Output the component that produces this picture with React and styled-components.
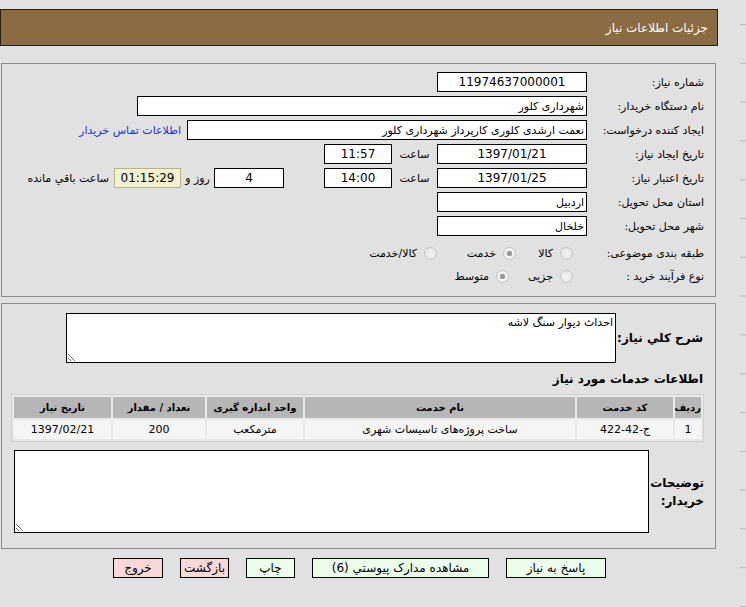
import React from 'react'
import styled, { createGlobalStyle } from 'styled-components'

const GlobalStyle = createGlobalStyle`
  body {
    margin: 0;
    background: #e1e1e1;
    font-family: "DejaVu Sans", Tahoma, sans-serif;
    font-size: 11px;
    color: #000;
  }
`;

const Page = styled.div`
  display: flex;
  width: 746px;
  height: 607px;
  overflow: hidden;
`;

const Main = styled.div`
  width: 718px;
  direction: rtl;
  padding-top: 9px;
  display: flex;
  flex-direction: column;
`;

const Strip = styled.div`
  flex: 1;
  background-image: linear-gradient(to bottom, #b9b9b9 0 1px, transparent 1px);
  background-size: 6px 38.8px;
  background-repeat: repeat-y;
  background-position: right 24px;
`;

const Header = styled.div`
  height: 35px;
  background: #8b6c42;
  border: 1px solid #2a2010;
  color: #fff;
  display: flex;
  align-items: center;
  padding-right: 9px;
  font-size: 12px;
`;

const Panel = styled.div`
  margin: ${p => p.$top}px 2px 0 1px;
  height: ${p => p.$height}px;
  border: 1px solid #8c8c8c;
  box-sizing: border-box;
  padding: ${p => p.$pad};
  display: flex;
  flex-direction: column;
`;

const Row = styled.div`
  display: flex;
  align-items: center;
  height: ${p => p.$h || 24}px;
  margin-top: ${p => p.$mt || 0}px;
`;

const Label = styled.div`
  width: 117px;
  flex-shrink: 0;
  white-space: nowrap;
`;

const Field = styled.div`
  width: ${p => p.$w}px;
  height: 20px;
  box-sizing: border-box;
  border: 1px solid #000;
  background: ${p => (p.$yellow ? '#f5f1cf' : '#fff')};
  border-color: ${p => (p.$yellow ? '#b9b48a' : '#000')};
  display: flex;
  align-items: center;
  justify-content: ${p => (p.$right ? 'flex-start' : 'center')};
  padding: 0 2px;
  font-size: ${p => (p.$right ? 11 : 12)}px;
  white-space: nowrap;
  flex-shrink: 0;
`;

const Text = styled.div`
  width: ${p => p.$w}px;
  text-align: center;
  white-space: nowrap;
  flex-shrink: 0;
`;

const Link = styled.a`
  color: #1a33c8;
  margin-right: 6px;
  text-decoration: none;
  white-space: nowrap;
`;

const RadioGroup = styled.label`
  display: flex;
  align-items: center;
  width: ${p => p.$w}px;
  padding-right: ${p => p.$pr || 0}px;
  box-sizing: border-box;
  flex-shrink: 0;
  color: #000;
`;

const Radio = styled.span`
  width: 11px;
  height: 11px;
  border-radius: 50%;
  border: 1px solid #c4c4c4;
  background: radial-gradient(circle, ${p => (p.$on ? '#9a9a9a 0 2.5px, #f2f2f2 3px' : '#f4f4f4 0, #e6e6e6 6px')});
  margin-left: 7px;
  flex-shrink: 0;
`;

const BoldLabel = styled.div`
  font-weight: bold;
  font-size: 12px;
  white-space: nowrap;
  line-height: ${p => p.$lh || 19}px;
`;

const Area = styled.textarea`
  width: ${p => p.$w}px;
  height: ${p => p.$h}px;
  box-sizing: border-box;
  border: 1px solid #000;
  background: #fff;
  font-family: "DejaVu Sans", Tahoma, sans-serif;
  font-size: 11px;
  direction: rtl;
  padding: 2px;
  margin: 0;
  outline: none;
  display: block;
`;

const DescRow = styled.div`
  display: flex;
  align-items: center;
  justify-content: space-between;
  padding-right: 1px;
`;

const SectionTitle = styled.div`
  font-weight: bold;
  font-size: 12px;
  margin-top: 9px;
  padding-right: 1px;
  height: 18px;
`;

const Table = styled.table`
  width: 691px;
  table-layout: fixed;
  border: 1px solid #cfcfcf;
  border-spacing: 2px;
  background: #e9e9e9;
  margin-top: 4px;
  font-size: 11px;
`;

const Th = styled.th`
  background: #b6b6b6;
  height: 21px;
  width: ${p => p.$w}px;
  padding: 0;
  font-weight: bold;
  font-size: 10px;
  white-space: nowrap;
`;

const Td = styled.td`
  background: #f5f5f5;
  height: 19px;
  text-align: center;
  padding: 0;
  white-space: nowrap;
`;

const NotesRow = styled.div`
  display: flex;
  align-items: center;
  justify-content: space-between;
  margin-top: 8px;
`;

const Buttons = styled.div`
  display: flex;
  justify-content: center;
  gap: 17px;
  margin-top: 9px;
  padding-left: 1px;
`;

const Button = styled.button`
  width: ${p => p.$w}px;
  height: 20px;
  border: 1px solid #000;
  background: ${p => (p.$danger ? '#fcd7d7' : '#ecfdec')};
  font-family: "DejaVu Sans", Tahoma, sans-serif;
  font-size: 12px;
  padding: 0;
  white-space: nowrap;
  overflow: hidden;
`;

const Spacer = styled.div`
  width: ${p => p.$w}px;
  flex-shrink: 0;
`;

const columns = [
  ['ردیف', 26],
  ['کد خدمت', 96],
  ['نام خدمت', 270],
  ['واحد اندازه گیری', 96],
  ['تعداد / مقدار', 92],
  ['تاریخ نیاز', 97],
]

const row = ['1', 'ج-42-422', 'ساخت پروژه‌های تاسیسات شهری', 'مترمکعب', '200', '1397/02/21']

export default function App() {
  return (
    <Page>
      <GlobalStyle />
      <Main>
        <Header>جزئیات اطلاعات نیاز</Header>

        <Panel $top={17} $height={234} $pad="6px 11px 0 0">
          <Row>
            <Label>شماره نیاز:</Label>
            <Field $w={150}>11974637000001</Field>
          </Row>
          <Row>
            <Label>نام دستگاه خریدار:</Label>
            <Field $w={450} $right>شهرداری کلور</Field>
          </Row>
          <Row>
            <Label>ایجاد کننده درخواست:</Label>
            <Field $w={400} $right>نعمت  ارشدی کلوری کارپرداز شهرداری کلور</Field>
            <Link href="#">اطلاعات تماس خریدار</Link>
          </Row>
          <Row>
            <Label>تاریخ ایجاد نیاز:</Label>
            <Field $w={150}>1397/01/21</Field>
            <Text $w={45}>ساعت</Text>
            <Field $w={68}>11:57</Field>
          </Row>
          <Row>
            <Label>تاریخ اعتبار نیاز:</Label>
            <Field $w={150}>1397/01/25</Field>
            <Text $w={45}>ساعت</Text>
            <Field $w={68}>14:00</Field>
            <Spacer $w={40} />
            <Field $w={70}>4</Field>
            <Text $w={33}>روز و</Text>
            <Field $w={67} $yellow>01:15:29</Field>
            <Spacer $w={5} />
            <span>ساعت باقي مانده</span>
          </Row>
          <Row>
            <Label>استان محل تحویل:</Label>
            <Field $w={150} $right>اردبیل</Field>
          </Row>
          <Row>
            <Label>شهر محل تحویل:</Label>
            <Field $w={150} $right>خلخال</Field>
          </Row>
          <Row $mt={3}>
            <Label>طبقه بندی موضوعی:</Label>
            <RadioGroup $w={71} $pr={14}><Radio />کالا</RadioGroup>
            <RadioGroup $w={79}><Radio $on />خدمت</RadioGroup>
            <RadioGroup $w={80}><Radio />کالا/خدمت</RadioGroup>
          </Row>
          <Row $h={22}>
            <Label>نوع فرآیند خرید :</Label>
            <RadioGroup $w={78} $pr={14}><Radio />جزیی</RadioGroup>
            <RadioGroup $w={80}><Radio $on />متوسط</RadioGroup>
          </Row>
        </Panel>

        <Panel $top={6} $height={246} $pad="9px 11px 0 12px">
          <DescRow>
            <BoldLabel>شرح کلي نیاز:</BoldLabel>
            <Area $w={550} $h={50} style={{ marginLeft: 52 }} readOnly defaultValue="احداث دیوار سنگ لاشه" />
          </DescRow>
          <SectionTitle>اطلاعات خدمات مورد نیاز</SectionTitle>
          <Table>
            <colgroup>
              {columns.map(([name, w]) => (
                <col key={name} style={{ width: w }} />
              ))}
            </colgroup>
            <thead>
              <tr>
                {columns.map(([name, w]) => (
                  <Th key={name} $w={w}>{name}</Th>
                ))}
              </tr>
            </thead>
            <tbody>
              <tr>
                {row.map((v, i) => (
                  <Td key={i}>{v}</Td>
                ))}
              </tr>
            </tbody>
          </Table>
          <NotesRow>
            <BoldLabel $lh={18}>توضیحات<br />خریدار:</BoldLabel>
            <Area $w={635} $h={83} readOnly defaultValue="" />
          </NotesRow>
        </Panel>

        <Buttons>
          <Button $w={100}>پاسخ به نیاز</Button>
          <Button $w={177}>مشاهده مدارک پیوستي (6)</Button>
          <Button $w={49}>چاپ</Button>
          <Button $w={49} $danger>بازگشت</Button>
          <Button $w={50} $danger>خروج</Button>
        </Buttons>
      </Main>
      <Strip />
    </Page>
  )
}
